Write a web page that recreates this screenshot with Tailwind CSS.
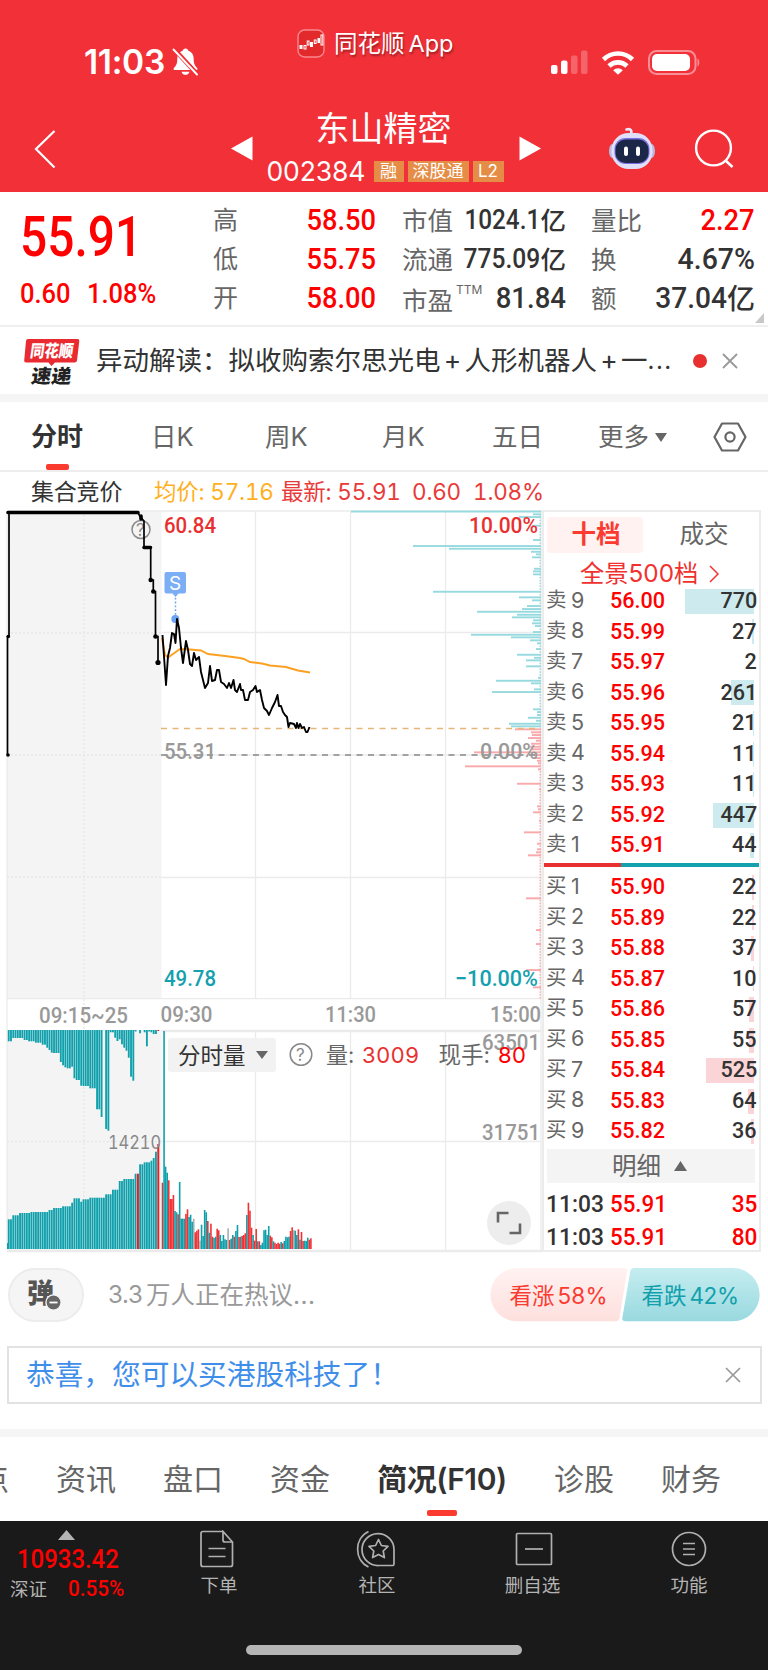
<!DOCTYPE html>
<html lang="zh-CN">
<head>
<meta charset="utf-8">
<title>东山精密 002384</title>
<script src="https://cdn.jsdelivr.net/npm/@tailwindcss/browser@4"></script>
</head>
<body class="w-[768px] h-[1670px] overflow-hidden bg-white text-[#333] leading-none whitespace-nowrap font-['Inter','Noto_Sans_CJK_SC',sans-serif]">

<!-- header -->
<header class="h-[192px] bg-[#f23038] text-white overflow-hidden">
  <div class="h-[100px] flex">
    <div class="w-[297px] pl-[84px] pt-[46px] flex gap-[8px] items-start">
      <span class="text-[33.500px] font-semibold w-[80px] tracking-[-0.300px]">11:03</span>
      <svg class="w-[27px] h-[29px] mt-[1px]" viewBox="0 0 27 29"><path d="M13.500 1.500c-1.700 0-2.600 1-2.800 2.300C7.200 4.800 5.300 8 5.300 12c0 5-1.300 6.700-3.500 9.200-.6.800-.3 1.700.8 1.700h21.800c1.100 0 1.400-.9.800-1.700-2.200-2.500-3.500-4.200-3.500-9.200 0-4-1.900-7.200-5.400-8.200-.2-1.300-1.100-2.300-2.800-2.300zM9.500 24.700h8c-.5 1.900-2 3.100-4 3.100s-3.500-1.200-4-3.100z" fill="#fff"/><path d="M2.500 2.500 25 27" stroke="#f23038" stroke-width="4.600"/><path d="M1.500 2.500 25 27.500" stroke="#fff" stroke-width="1.900" stroke-linecap="round"/></svg>
    </div>
    <div class="w-[254px] pt-[29px] flex items-start gap-[10px]">
      <svg class="w-[28px] h-[29px]" viewBox="0 0 28 29"><rect x="1" y="1" width="26" height="27" rx="6.500" fill="#e22a2c" stroke="#f7898c" stroke-width="1.400"/><g fill="#fff"><rect x="2.500" y="16" width="3" height="4"/><rect x="13" y="13" width="3" height="5"/><rect x="20.500" y="9" width="2.500" height="5"/></g><g fill="none" stroke="#fff"><rect x="7" y="16.500" width="2" height="3.500"/><rect x="10.200" y="12" width="1.800" height="4"/><rect x="17.300" y="11" width="1.800" height="3.500"/><rect x="24" y="6" width="1.800" height="10"/></g></svg>
      <span class="text-[23.500px] pt-[3px] ml-[-1px] [text-shadow:1px_2px_2px_rgba(0,0,0,.35)]">同花顺<span class="ml-[4px]">App</span></span>
    </div>
    <svg class="w-[152px] h-[28px] mt-[49px]" viewBox="551 49 152 28"><g fill="#fff"><rect x="551" y="65" width="6.500" height="9" rx="2"/><rect x="561" y="60.500" width="6.500" height="13.500" rx="2"/><rect x="571" y="55.500" width="6.500" height="18.500" rx="2" opacity=".25"/><rect x="581" y="50.500" width="6.500" height="23.500" rx="2" opacity=".25"/></g>
      <g fill="none" stroke="#fff" stroke-width="4.600"><path d="M603.500 59.500a20.500 20.500 0 0 1 29.000 0"/><path d="M609 66a13 13 0 0 1 18 0"/></g><path d="M613.200 70.200a7 7 0 0 1 9.600 0l-4.800 4.600z" fill="#fff"/>
      <rect x="649" y="51" width="46.500" height="23" rx="7.500" fill="none" stroke="#f98f94" stroke-width="2"/><rect x="652" y="54" width="38" height="17" rx="5" fill="#fff"/><path d="M697.500 58.500c2.400.7 2.400 7.300 0 8z" fill="#f98f94"/></svg>
  </div>
  <div class="h-[92px] flex">
    <svg class="w-[24px] h-[44px] ml-[33px] mt-[27px]" viewBox="0 0 24 44"><path d="M21.500 4 3 22l18.500 18.500" fill="none" stroke="#fff" stroke-width="2.200"/></svg>
    <svg class="w-[22px] h-[25px] ml-[174px] mt-[36px]" viewBox="0 0 22 25"><path d="M0 12.500 21.500.5v24z" fill="#fff"/></svg>
    <div class="w-[266px] flex flex-col items-center pt-[12px] pr-[5px]">
      <div class="text-[34px]">东山精密</div>
      <div class="flex items-center gap-[4px] mt-[11px] h-[28px] pl-[3px]">
        <span class="text-[26.500px] w-[103px] tracking-[-0.100px]">002384</span>
        <span class="bg-[#e58d46] text-[17px] h-[21px] w-[30px] flex items-center justify-center">融</span>
        <span class="bg-[#e58d46] text-[17px] h-[21px] w-[61px] flex items-center justify-center">深股通</span>
        <span class="bg-[#e58d46] text-[17px] h-[21px] w-[31px] flex items-center justify-center">L2</span>
      </div>
    </div>
    <svg class="w-[22px] h-[25px] mt-[36px]" viewBox="0 0 22 25"><path d="M22 12.500.5.500v24z" fill="#fff"/></svg>
    <svg class="w-[48px] h-[46px] ml-[67px] mt-[25px]" viewBox="608 125 48 46">
      <path d="M630.500 135c2-4 .5-7-4-5.500" fill="none" stroke="#e8e8fa" stroke-width="2.600" stroke-linecap="round"/>
      <ellipse cx="612.500" cy="151" rx="3.500" ry="7" fill="#b9b9e4"/><ellipse cx="651.500" cy="151" rx="3.500" ry="7" fill="#b9b9e4"/>
      <rect x="611.500" y="133" width="41" height="36" rx="17" fill="#dfe0f8"/>
      <rect x="614.500" y="138" width="35" height="26" rx="11" fill="#7a6fe0"/><rect x="615.500" y="139.500" width="33" height="23.500" rx="10" fill="#1c2748"/>
      <rect x="624" y="146.500" width="4" height="9.500" rx="2" fill="#fff"/><rect x="636" y="146.500" width="4" height="9.500" rx="2" fill="#fff"/></svg>
    <svg class="w-[42px] h-[42px] ml-[38px] mt-[28px]" viewBox="0 0 42 42"><circle cx="19.500" cy="20" r="17.400" fill="none" stroke="#fff" stroke-width="2.400"/><path d="M31.500 32.500l7 6.500" stroke="#fff" stroke-width="2.600"/></svg>
  </div>
</header>

<!-- quote -->
<section class="h-[135px] border-b-2 border-[#efefef] flex">
  <div class="w-[213px] pl-[20px] text-[#ff0000] font-['Roboto'] font-medium">
    <div class="h-[62px] mt-[14px] flex items-center"><span class="text-[55px] inline-block origin-left scale-x-[.87]">55.91</span></div>
    <div class="h-[36px] mt-[8px] flex items-center"><span class="text-[28px] w-[67px]"><span class="inline-block origin-left scale-x-[.91]">0.60</span></span><span class="text-[28px] inline-block origin-left scale-x-[.91]">1.08%</span></div>
  </div>
  <div class="w-[163px] pt-[9px] text-[25px] text-[#666]">
    <div class="h-[39px] flex justify-between items-center"><span>高</span><span class="font-['Roboto'] font-medium text-[29px] text-[#ff0000] inline-block origin-right scale-x-[.94]">58.50</span></div>
    <div class="h-[39px] flex justify-between items-center"><span>低</span><span class="font-['Roboto'] font-medium text-[29px] text-[#ff0000] inline-block origin-right scale-x-[.94]">55.75</span></div>
    <div class="h-[39px] flex justify-between items-center"><span>开</span><span class="font-['Roboto'] font-medium text-[29px] text-[#ff0000] inline-block origin-right scale-x-[.94]">58.00</span></div>
  </div>
  <div class="w-[164px] ml-[26px] pt-[9px] text-[25.500px] text-[#666]">
    <div class="h-[39px] flex justify-between items-center"><span>市值</span><span class="text-[#333] font-medium flex items-center"><span class="font-['Roboto'] text-[27px] inline-block origin-right scale-x-[.9]">1024.1</span>亿</span></div>
    <div class="h-[39px] flex justify-between items-center"><span>流通</span><span class="text-[#333] font-medium flex items-center"><span class="font-['Roboto'] text-[27px] inline-block origin-right scale-x-[.91]">775.09</span>亿</span></div>
    <div class="h-[39px] flex justify-between items-center"><span class="pt-[4px] flex items-start">市盈<span class="text-[12px] ml-[3px] mt-[-4px]">TTM</span></span><span class="font-['Roboto'] font-medium text-[29px] text-[#333] inline-block origin-right scale-x-[.95]">81.84</span></div>
  </div>
  <div class="w-[164px] ml-[25px] pt-[9px] text-[25.500px] text-[#666]">
    <div class="h-[39px] flex justify-between items-center"><span>量比</span><span class="font-['Roboto'] font-medium text-[29px] text-[#ff0000] inline-block origin-right scale-x-[.94]">2.27</span></div>
    <div class="h-[39px] flex justify-between items-center"><span>换</span><span class="font-['Roboto'] font-medium text-[29px] text-[#333] inline-block origin-right scale-x-[.98]">4.67%</span></div>
    <div class="h-[39px] flex justify-between items-center"><span>额</span><span class="text-[#333] font-medium flex items-center text-[28px]"><span class="font-['Roboto'] text-[29px] inline-block origin-right scale-x-[.97]">37.04</span>亿</span></div>
  </div>
  <svg class="w-[9px] h-[10px] mt-[121px]" viewBox="0 0 9 10"><path d="M9 0v10H0z" fill="#c8c8c8"/></svg>
</section>

<!-- news -->
<section class="h-[67px] flex items-center">
  <svg class="w-[58px] h-[48px] ml-[23px] mt-[2px] overflow-visible" viewBox="23 336 58 48"><path d="M28 337h49.500q2 0 1.800 2l-2.300 19.500q-.3 2-2.300 2H55l-3.500 3.500-3-3.500H26q-2 0-1.800-2L26 339q.2-2 2-2z" fill="#e92b31"/><g transform="translate(0 355) skewX(-8)"><text x="29.500" y="0" font-size="17" font-weight="900" fill="#fff" textLength="43" lengthAdjust="spacingAndGlyphs">同花顺</text></g><g transform="translate(0 381) skewX(-8)"><text x="30.500" y="0" font-size="19" font-weight="900" fill="#222" textLength="40" lengthAdjust="spacingAndGlyphs">速递</text></g></svg>
  <div class="w-[596px] ml-[15px] text-[26.500px] flex items-center"><span>异动解读：拟收购索尔思光电</span><span class="w-[24px] text-center">+</span><span>人形机器人</span><span class="w-[24px] text-center">+</span><span>一</span><span class="text-[24px] tracking-[1.500px]">...</span></div>
  <span class="w-[14px] h-[14px] rounded-full bg-[#e93030] ml-[1px]"></span>
  <svg class="w-[16px] h-[16px] ml-[15px]" viewBox="0 0 16 16"><path d="M1 1l14 14M15 1 1 15" stroke="#999" stroke-width="1.800"/></svg>
</section>
<div class="h-[8px] bg-[#f5f5f5]"></div>

<!-- period tabs -->
<nav class="h-[70px] border-b-2 border-[#eeeeee] flex text-[25.500px] text-[#666]">
  <div class="w-[54px] ml-[30px] flex flex-col items-center justify-between"><span class="text-[26px] font-bold text-[#333] pt-[22px]">分时</span><i class="w-[23px] h-[6px] rounded-[2px] bg-[#fb3a30]"></i></div>
  <span class="ml-[67px] w-[114px] pt-[22px]">日K</span>
  <span class="w-[117px] pt-[22px]">周K</span>
  <span class="w-[110px] pt-[22px]">月K</span>
  <span class="w-[106px] pt-[22px]">五日</span>
  <span class="w-[115px] pt-[22px] flex gap-[6px]">更多<svg class="w-[12px] h-[9px] mt-[9px]" viewBox="0 0 12 9"><path d="M0 0h12L6 9z" fill="#666"/></svg></span>
  <svg class="w-[34px] h-[30px] mt-[20px]" viewBox="0 0 34 30"><path d="M9 1.500h16L32.500 15 25 28.500H9L1.500 15z" fill="none" stroke="#666" stroke-width="2.200" stroke-linejoin="round"/><circle cx="17" cy="15" r="4.600" fill="none" stroke="#666" stroke-width="2.200"/></svg>
</nav>

<!-- quote line -->
<div class="h-[38px] flex items-center pt-[3px] text-[22.500px] text-[#e93a3a] tracking-[-0.200px] tabular-nums">
  <span class="ml-[31px] w-[123px] text-[#333] text-[23px]">集合竞价</span>
  <span class="w-[127px] text-[#ffb01e]">均价: 57.16</span>
  <span class="w-[131px]">最新: 55.91</span>
  <span class="w-[61px]">0.60</span>
  <span>1.08%</span>
</div>

<!-- chart + order book -->
<section class="h-[742px] flex">
  <svg id="chart" class="w-[542px] h-[742px] overflow-visible" viewBox="0 510 542 742" font-family="Roboto" font-weight="500" font-size="22.500">
    <rect x="7" y="511" width="154.500" height="488" fill="#f4f4f4"/><rect x="7" y="1030" width="154.500" height="220" fill="#f4f4f4"/>
    <g stroke="#ebebeb" stroke-width="1.300" fill="none">
      <path d="M7 511H542M162 632.500H541M162 755H541M162 877.500H541M7 998.700H541M162 1141.500H541M255.500 511V999M350.500 511V999M445.500 511V999M255.500 1031V1250M350.500 1031V1250M445.500 1031V1250M7 511V1250M541 511V1250"/>
      <path d="M84 511V1250M7 633H162M7 755H162M7 877H162M7 1141.500H162" stroke="#e6e6e6" stroke-dasharray="2 2"/>
      <path d="M162 1031H541M7 1251H542" stroke-width="2.500"/>
    </g>
    <g id="profile"></g>
    <g id="volume"></g>
    <path d="M161 728.500H541" stroke="#e6b678" stroke-width="1.400" stroke-dasharray="6 5.500"/>
    <path d="M161 755H541" stroke="#888" stroke-width="1.400" stroke-dasharray="6 5.500"/>
    <circle cx="141" cy="529.500" r="9" fill="none" stroke="#8a8a8a" stroke-width="1.500"/>
    <text x="136" y="536" font-family="Inter" font-size="17" font-weight="400" fill="#8a8a8a">?</text>
    <path d="M7.500 755V636.500H9V512.500H138L140 516.500 144 521V547.500H150.700V580H153.300V591.500H155.500V636.500H158V662" fill="none" stroke="#000" stroke-width="1.700"/>
    <path d="M8 512.500H138M141 516V519M144 547.500H150.500" fill="none" stroke="#000" stroke-width="3.600" stroke-linecap="round"/>
    <g fill="#000"><circle cx="150.700" cy="580" r="2.300"/><circle cx="153.300" cy="591.500" r="2.300"/><circle cx="155.500" cy="636.500" r="2.300"/><circle cx="158" cy="662.500" r="2.600"/><circle cx="8" cy="755" r="1.800"/><circle cx="8.300" cy="636.500" r="1.800"/></g>
    <path d="M162 638L165 655 168 657.500 173 654 180 649 190 649.500 201 650.500 208 654 225 656 240 658 244 659 250 662 262 663.500 270 665.500 286 667 298 670.500 310 672.500" fill="none" stroke="#fba021" stroke-width="1.900"/>
    <path d="M175.500 594V616" stroke="#6aa4f3" stroke-width="1.500" stroke-dasharray="1.800 2"/><circle cx="175.300" cy="619" r="4" fill="#6aa4f3"/>
    <path d="M166.500 572h17.500q2 0 2 2v17.500q0 2-2 2h-5.500l-3 3.500-3-3.500h-6q-2 0-2-2V574q0-2 2-2z" fill="#7baef5"/>
    <text x="169" y="590" font-family="Inter" font-size="19" font-weight="400" fill="#fff">S</text>
    <path d="M162.500 635L166 685 168 656 170 648 172 633 174 634 175.500 643 177 619 179 628 181 648 183 663 186 641 188 650 190 664 192 666 194 653 196 660 199 657 201 672 203 680 205 688 208 683 210 666 212 681 215 680 217 670 219 670 221 682 224 684 227 688 229 683 231 688 233.500 680 235 690 237 692 240 684 241 690 243 690 245 700 248 700 250 692 253 690 255.500 686 257 692 260 690 262 700 264 708 267 711 269 715 272 708 275 702 277.500 695 279 706 281 706 283 712 285 715 287 717 288.500 727 290 723 294 724 296 728 297 723 298.500 728 300 724 302 728 304 727 306 732 307.500 732 309.500 727" fill="none" stroke="#000" stroke-width="1.900" stroke-linejoin="round"/>
    <text x="164" y="532.500" fill="#e93030" textLength="52" lengthAdjust="spacingAndGlyphs">60.84</text>
    <text x="469" y="532.500" fill="#e93030" textLength="69" lengthAdjust="spacingAndGlyphs">10.00%</text>
    <text x="164" y="758.500" fill="#999" textLength="52" lengthAdjust="spacingAndGlyphs">55.31</text>
    <text x="480" y="758.500" fill="#999" textLength="58" lengthAdjust="spacingAndGlyphs">0.00%</text>
    <text x="164" y="985.500" fill="#14a0ae" textLength="52" lengthAdjust="spacingAndGlyphs">49.78</text>
    <text x="455" y="985.500" fill="#14a0ae" textLength="83" lengthAdjust="spacingAndGlyphs">−10.00%</text>
    <g fill="#999">
      <text x="39" y="1023" textLength="89" lengthAdjust="spacingAndGlyphs">09:15~25</text>
      <text x="160.500" y="1021.500" textLength="52" lengthAdjust="spacingAndGlyphs">09:30</text>
      <text x="325" y="1021.500" textLength="51" lengthAdjust="spacingAndGlyphs">11:30</text>
      <text x="490" y="1021.500" textLength="51" lengthAdjust="spacingAndGlyphs">15:00</text>
      <text x="482" y="1049.500" textLength="58" lengthAdjust="spacingAndGlyphs">63501</text>
      <text x="482" y="1139.500" textLength="58" lengthAdjust="spacingAndGlyphs">31751</text>
      <text x="108" y="1148.500" font-family="Inter" font-weight="400" font-size="18" fill="#888" class="tabular-nums" textLength="53" lengthAdjust="spacingAndGlyphs">14210</text>
    </g>
    <rect x="168" y="1038" width="108" height="34" rx="3" fill="#f2f2f2"/>
    <g font-family="Inter, 'Noto Sans CJK SC', sans-serif" font-weight="400" font-size="22">
      <text x="178" y="1063.500" font-size="22.500" fill="#333">分时量</text>
      <path d="M256 1051h12l-6 8z" fill="#666"/>
      <circle cx="301" cy="1054.500" r="10.800" fill="none" stroke="#888" stroke-width="1.500"/>
      <text x="296" y="1061" font-size="17" fill="#888">?</text>
      <text x="326" y="1063" font-size="22" fill="#666">量:</text>
      <text x="362" y="1062.500" fill="#e93030" textLength="57">3009</text>
      <text x="438.500" y="1063" font-size="22.500" fill="#666">现手:</text>
      <text x="498" y="1062.500" fill="#ff0000" textLength="28">80</text>
    </g>
    <circle cx="509" cy="1223" r="22" fill="#ededed"/>
    <path d="M498 1222.500V1213H508.500M520 1223.500V1233H509.500" fill="none" stroke="#666" stroke-width="2.600"/>
  </svg>

  <div class="w-[219px] border-x-2 border-t-2 border-b-2 border-[#ececec] flex flex-col">
    <div class="h-[43px] shrink-0 pt-[5px] pl-[3px] flex text-[24.500px]">
      <span class="w-[99px] h-[36px] rounded-[4px] bg-[#fff2f1] text-[#fb3a30] font-bold flex items-center justify-center pb-[1px] pl-[2px]">十档</span>
      <span class="w-[114px] h-[36px] ml-[5px] text-[#666] flex items-center justify-center pb-[1px] pl-[1px]">成交</span>
    </div>
    <div class="h-[30px] shrink-0 pt-[7px] flex items-center pl-[36px] text-[24.300px] text-[#f0312f]">全景500档<svg class="w-[10px] h-[18px] ml-[11px]" viewBox="0 0 10 18"><path d="M1 1l8 8-8 8" fill="none" stroke="#f0312f" stroke-width="1.500"/></svg></div>
    <div id="asks" class="h-[275px] shrink-0"></div>
    <div class="h-[4px] shrink-0 mt-[3px] flex"><i class="w-[77px] bg-[#e93030]"></i><i class="flex-1 bg-[#14a0ae]"></i></div>
    <div id="bids" class="h-[275px] shrink-0 mt-[4px]"></div>
    <div class="h-[34px] shrink-0 mt-[3px] ml-[3px] w-[208px] bg-[#f4f4f4] text-[24.500px] text-[#666] flex items-center justify-center gap-[13px] pr-[3px]">明细<svg class="w-[13px] h-[10px]" viewBox="0 0 13 10"><path d="M0 10h13L6.500 0z" fill="#666"/></svg></div>
    <div class="mt-[5px] h-[60px] shrink-0 font-['Roboto'] font-medium text-[24px] pl-[2px] pr-[2px]">
      <div class="h-[32.500px] flex items-center"><span class="w-[64px] text-[#333]"><span class="inline-block origin-left scale-x-[.95]">11:03</span></span><span class="w-[70px] text-[#ff0000]"><span class="inline-block origin-left scale-x-[.93]">55.91</span></span><span class="flex-1 text-right text-[#ff0000]"><span class="inline-block origin-right scale-x-[.94]">35</span></span></div>
      <div class="h-[32.500px] flex items-center"><span class="w-[64px] text-[#333]"><span class="inline-block origin-left scale-x-[.95]">11:03</span></span><span class="w-[70px] text-[#ff0000]"><span class="inline-block origin-left scale-x-[.93]">55.91</span></span><span class="flex-1 text-right text-[#ff0000]"><span class="inline-block origin-right scale-x-[.94]">80</span></span></div>
    </div>
  </div>
</section>

<!-- discussion -->
<section class="h-[94px] pt-[16px] flex">
  <div class="w-[76px] h-[54px] ml-[8px] rounded-full bg-[#f5f5f5] border-2 border-[#ececec] flex items-center pl-[17px]"><span class="text-[27px] font-black text-[#555] pb-[4px]">弹</span><svg class="w-[17px] h-[17px] ml-[-9px] mt-[14px]" viewBox="0 0 17 17"><circle cx="8.500" cy="8.500" r="7.600" fill="#666" stroke="#f5f5f5" stroke-width="1.400"/><path d="M4.500 8.500h8" stroke="#fff" stroke-width="1.800"/></svg></div>
  <div class="w-[382px] ml-[24px] h-[54px] flex items-center text-[24.500px] text-[#999]"><span class="w-[38px] text-[24px] tracking-[-0.300px]">3.3</span>万人正在热议<span class="tracking-[0.500px]">...</span></div>
  <svg class="w-[270px] h-[54px]" viewBox="491 1268 270 54" font-size="22.500">
    <defs><linearGradient id="up" x1="0" y1="0" x2="0" y2="1"><stop offset="0" stop-color="#fff2f1"/><stop offset="1" stop-color="#fde0de"/></linearGradient><linearGradient id="dn" x1="0" y1="0" x2="0" y2="1"><stop offset="0" stop-color="#c5edf0"/><stop offset="1" stop-color="#98d9df"/></linearGradient></defs>
    <path d="M518 1268h107q3.500 0 3 3.500L620.500 1318q-.7 3.300-4 3.300H518a26.600 26.600 0 0 1 0-53.300z" fill="url(#up)"/>
    <path d="M734 1268H635q-3 0-3.600 3l-8 46.500q-.7 3.800 3 3.800H734a26.600 26.600 0 0 0 0-53.300z" fill="url(#dn)"/>
    <g fill="#fb3a30"><text x="510.500" y="1303.500">看涨</text><text x="558.500" y="1303.500" textLength="50">58%</text></g>
    <g fill="#12a0ac"><text x="642.500" y="1303.500">看跌</text><text x="690.500" y="1303.500" textLength="49.500">42%</text></g>
  </svg>
</section>

<!-- notice -->
<section class="h-[58px] w-[755px] ml-[7px] border-2 border-[#e2e2e2] flex items-center justify-between pl-[17px] pr-[19px]">
  <span class="text-[28.700px] pt-[1px] text-[#3f8eea]">恭喜，您可以买港股科技了！</span>
  <svg class="w-[16px] h-[16px]" viewBox="0 0 16 16"><path d="M1 1l14 14M15 1 1 15" stroke="#999" stroke-width="1.700"/></svg>
</section>
<div class="h-[8px] mt-[25px] bg-[#f5f5f5]"></div>

<!-- content tabs -->
<nav class="h-[84px] flex text-[30px] text-[#666] overflow-hidden">
  <span class="ml-[-21px] w-[77px] pt-[27px]">点</span>
  <span class="w-[107px] pt-[27px]">资讯</span>
  <span class="w-[107px] pt-[27px]">盘口</span>
  <span class="w-[107px] pt-[27px]">资金</span>
  <span class="w-[130px] pt-[27px] pb-[5px] flex flex-col justify-between items-center text-[#333] font-semibold"><span class="tracking-[-0.400px]">简况(F10)</span><i class="w-[30px] h-[6px] rounded-[2px] bg-[#fb3a30]"></i></span>
  <span class="ml-[47px] w-[107px] pt-[27px]">诊股</span>
  <span class="pt-[27px]">财务</span>
</nav>

<!-- bottom bar -->
<footer class="h-[149px] bg-[#1a1a1a] text-[#b4b4b4] text-[18.500px]">
  <div class="h-[124px] flex">
    <div class="w-[138px] pt-[9px] pl-[10px]">
      <svg class="w-[17px] h-[10px] ml-[48px]" viewBox="0 0 17 10"><path d="M0 10h17L8.500 0z" fill="#b4b4b4"/></svg>
      <div class="mt-[5px] ml-[7px] h-[28px] flex items-center text-[#ff0000] font-['Roboto'] font-medium text-[26px]"><span class="inline-block origin-left scale-x-[.92]">10933.42</span></div>
      <div class="h-[30px] flex items-center"><span class="w-[58px] pt-[3px]">深证</span><span class="inline-block origin-left scale-x-[.92] text-[#ff0000] font-['Roboto'] font-medium text-[22.500px]">0.55%</span></div>
    </div>
    <div class="w-[162px] flex flex-col items-center pt-[9px]"><svg class="w-[36px] h-[38px] mr-[4px]" viewBox="0 0 36 38" fill="none" stroke="#b0b0b0" stroke-width="1.700"><path d="M24 1.500H4Q2 1.500 2 3.500v31q0 2 2 2h27.500q2 0 2-2V12L24 1.500V10q0 2 2 2h7.500"/><path d="M9.500 18.500h17M9.500 26.500h17"/></svg><span class="mt-[8px]">下单</span></div>
    <div class="w-[154px] flex flex-col items-center pt-[9px]"><svg class="w-[40px] h-[38px] mr-[4px]" viewBox="355 1530 40 38" fill="none" stroke="#b0b0b0" stroke-width="1.700"><path d="M393.500 1565.500h-14.500a16 16 0 1 1 15-16v14.500q0 1.500-1.500 1.500z"/><path d="M368.500 1531.500c-14.500 7-14.500 28.500 0 35.500"/><path d="M378.500 1539.500l2.900 6 6.600.9-4.800 4.600 1.200 6.600-5.900-3.200-5.900 3.200 1.200-6.600-4.800-4.600 6.600-.9z" stroke-linejoin="round"/></svg><span class="mt-[8px]">社区</span></div>
    <div class="w-[157px] flex flex-col items-center pt-[9px]"><svg class="w-[38px] h-[38px] ml-[3px]" viewBox="0 0 38 38" fill="none" stroke="#b0b0b0" stroke-width="1.700"><rect x="1.500" y="3.500" width="35" height="31" rx="1"/><path d="M10 19h18"/></svg><span class="mt-[8px]">删自选</span></div>
    <div class="w-[156px] flex flex-col items-center pt-[9px]"><svg class="w-[38px] h-[38px]" viewBox="0 0 38 38" fill="none" stroke="#b0b0b0" stroke-width="1.700"><circle cx="19" cy="19" r="16.500"/><path d="M13 13.500h12M13 19h12M13 24.500h12"/></svg><span class="mt-[8px]">功能</span></div>
  </div>
  <div class="w-[276px] h-[10px] mx-auto rounded-full bg-[#b5b5b5]"></div>
</footer>

<script>
var T='#0fa0ac',R='#ee3336',G='#aab0b0';
function rect(x,y,w,h,f){return '<rect x="'+x+'" y="'+y+'" width="'+w+'" height="'+h+'" fill="'+f+'"/>';}
// price-level distribution: [y, width]
var up=[[511.5,190],[514.3,8],[517,22],[525.7,9],[540,8],[546,128],[548.7,92],[551.7,10],[554.3,5],[557.3,9],[568.7,7],[571.3,8],[574.3,8],[591.7,108],[597.3,22],[600.3,9],[606,14],[609,19],[611.7,64],[614.7,24],[617.3,29],[620.3,8],[623.3,9],[626,6],[632,8],[634.7,70],[637.3,30],[640.3,11],[643.3,4],[649,5],[654.7,24],[657.7,7],[660.3,15],[666.3,15],[677.7,3],[680.7,45],[683.3,10],[689.3,7],[692,49],[709.3,8],[712,4],[715,4],[717.7,13],[720.7,5],[723.7,32],[726.3,30]];
var dn=[[729.3,26],[732.3,10],[735,9],[738,13],[740.7,5],[743.7,10],[746.7,11],[749.3,9],[752.3,67],[755,7],[758,7],[760.7,4],[763.3,3],[766.3,76],[769.3,3],[783.7,24],[789.3,2],[806.3,4],[809.3,3],[812.3,8],[820.7,2],[832.3,17],[843.7,4],[849.3,4],[852.3,5],[855.3,13],[898.3,15],[930,5],[944,5],[970,15],[987.3,8]];
var s='',i,x,y;
for(y=514;y<728;y+=2.860)s+=rect(539.500,y.toFixed(1),1.500,1.500,'#9bdbe0');
for(y=731;y<998;y+=2.860)s+=rect(539.500,y.toFixed(1),1.500,1.500,'#f9b0b2');
up.forEach(function(b){s+=rect(541-b[1],b[0]-.9,b[1],1.900,'#96d9de');});
dn.forEach(function(b){s+=rect(541-b[1],b[0]-.9,b[1],1.900,'#f9a9ab');});
document.getElementById('profile').innerHTML=s;
// call-auction volume: [right edge, matched top] and [right edge, unmatched bottom]
var lo=[[8,1243],[12.500,1219.300],[19.500,1215.300],[29.500,1213],[49,1212],[53.500,1210],[63,1208],[71.800,1206.300],[74,1202.700],[81,1198.300],[83,1201.700],[90,1199.300],[104.200,1197.700],[111,1194.300],[118,1189.700],[124,1181],[135.500,1179],[138.200,1173.700],[143,1164.300],[150,1162.300],[152.500,1160.700],[154.500,1158],[156.800,1151.700],[159.500,1144]];
var hi=[[12.500,1041.300],[23.500,1038],[28.500,1040],[35,1041.300],[42,1042.700],[47,1044.700],[49,1047.700],[51.500,1050],[53.500,1052.700],[60.500,1053],[62.800,1062],[65,1065.300],[67,1067.300],[71.800,1068.300],[74,1066.700],[76.500,1078.300],[81,1080],[83,1085.700],[90,1086],[95,1088.300],[99.500,1109.300],[101.800,1117],[104.400,1030],[106.700,1129],[109.200,1130.700],[113.500,1032.300],[115.800,1037.700],[118,1041],[120,1039.300],[122.500,1044.300],[125,1047.700],[127.200,1050.700],[129.500,1057.700],[131.800,1076.700],[134,1080.700],[136.200,1031.500],[138.500,1030],[140.500,1033.300],[143.200,1030],[145.500,1032.300],[147.500,1046.300],[150,1031.500],[152.200,1032.300],[157,1034],[160,1031]];
function lookup(a,x){for(var k=0;k<a.length;k++)if(x<=a[k][0])return a[k][1];return null;}
s=rect(7,1243,1,6,T);
for(i=0;i<67;i++){
  x=7.800+i*2.265;
  var l=lookup(lo,x+1),h=lookup(hi,x+1),red=(i===57||i===66);
  if(l)s+=rect(x.toFixed(2),l,red?2:1.850,1249-l,red?'#ee1c1c':T);
  if(h&&h>1030)s+=rect(x.toFixed(2),1030,1.850,h-1030,i===66?'#ee1c1c':T);
}
// per-minute volume tops after the open
var m='608r 153t 560t 578t 601r 657r 657r 645r 693t 697t 703r 606t 716t 716t 716t 702r 688r 711t 704t 725t 716g 757r 752r 748r 782g 734t 768t 690t 697t 723r 758t 731r 770r 774t 770t 746r 751r 765t 783t 765t 778t 780t 745g 780r 776t 765t 770r 753t 735t 771r 770t 768r 765r 760r 705t 668r 692r 743r 765t 782r 747r 784t 784r 795t 788t 751t 749t 765t 738t 767r 772r 784t 788r 792r 788r 791r 786t 790r 783t 770t 772t 770t 753r 742r 751g 752t 765t 748r 779t 756r 783r 782t 783t 773t 779r 775r'.split(' ');
m.forEach(function(v,k){var t=980+parseInt(v,10)/3,c={r:R,t:T,g:G}[v.slice(-1)];s+=rect((161.700+k*1.562).toFixed(2),t.toFixed(1),1.600,(1249-t).toFixed(1),c);});
document.getElementById('volume').innerHTML=s;
// order book
function row(label,n,p,q,w,c){
  return '<div class="h-[30.550px] flex items-center text-[20.500px] text-[#666] pl-[2px] pr-[2px]">'
  +'<span class="w-[25px]">'+label+'</span><span class="w-[39px] text-[21.500px]">'+n+'</span>'
  +'<span class="w-[60px] font-[\'Roboto\'] font-medium text-[22.500px] text-[#ff0000]"><span class="inline-block origin-left scale-x-[.96]">'+p+'</span></span>'
  +'<span class="flex-1 h-[25px] flex items-center justify-end relative"><i class="absolute right-[3px] top-[1px] h-[25px] '+c+'" style="width:'+w+'px"></i><span class="relative font-[\'Roboto\'] font-medium text-[22.500px] text-[#333] inline-block origin-right scale-x-[.96]">'+q+'</span></span></div>';
}
var A=[[56.00,770,69],[55.99,27,2.500],[55.97,2,0],[55.96,261,23],[55.95,21,1.500],[55.94,11,1],[55.93,11,1],[55.92,447,41],[55.91,44,4]];
var B=[[55.90,22,2],[55.89,22,2],[55.88,37,3],[55.87,10,1],[55.86,57,5],[55.85,55,5],[55.84,525,48],[55.83,64,6],[55.82,36,3]];
document.getElementById('asks').innerHTML=A.map(function(r,k){return row('卖',9-k,r[0].toFixed(2),r[1],r[2],'bg-[#cdebee]');}).join('');
document.getElementById('bids').innerHTML=B.map(function(r,k){return row('买',k+1,r[0].toFixed(2),r[1],r[2],'bg-[#fad4d6]');}).join('');
</script>
</body>
</html>
